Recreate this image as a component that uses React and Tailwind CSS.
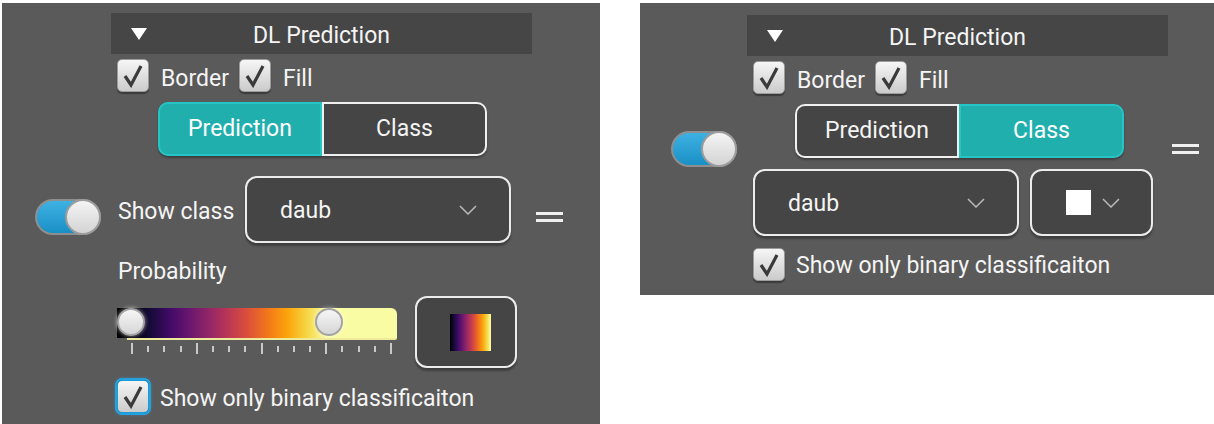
import React from "react";
import clsx from "clsx";

const INFERNO_BAR =
  "bg-[linear-gradient(90deg,#000004_5%,#160b39_12%,#420a68_19%,#6a176e_26%,#932667_33%,#bc3754_40%,#dd513a_47%,#f37819_54%,#fca50a_61%,#f6d746_68%,#fafca4_75%,#fafca4_100%)]";
const INFERNO_SWATCH =
  "bg-[linear-gradient(90deg,#000004_0%,#160b39_10%,#420a68_20%,#6a176e_30%,#932667_40%,#bc3754_50%,#dd513a_60%,#f37819_70%,#fca50a_80%,#f6d746_90%,#fcffa4_100%)]";

function Header() {
  return (
    <div className="grid grid-cols-[1fr_auto_1fr] items-center w-[421px] h-[41px] bg-[#464646]">
      <div className="pl-[20px]">
        <svg width="16" height="12" viewBox="0 0 16 12">
          <polygon points="0,0 16,0 8,12" fill="#ffffff" />
        </svg>
      </div>
      <span className="pt-[4px] text-[23px] leading-[26px] text-[#f4f4f4]">DL Prediction</span>
      <div />
    </div>
  );
}

function Checkbox({ focused }) {
  return (
    <div
      className={clsx(
        "w-[32px] h-[33px] shrink-0 rounded-[5px] border bg-linear-to-b from-[#f6f6f6] to-[#cbcbcb] flex items-center justify-center",
        focused
          ? "border-[#1d9ad6] ring-2 ring-[#22a3df] shadow-[0_0_4px_#3fb6ee]"
          : "border-[#9c9c9c] shadow-[0_2px_1px_rgba(0,0,0,0.35)]"
      )}
    >
      <svg width="24" height="24" viewBox="0 0 24 24">
        <path d="M4 12 L10 21 L20 2" fill="none" stroke="#3a3a3a" strokeWidth="3.2" strokeLinejoin="miter" />
      </svg>
    </div>
  );
}

function CheckRow() {
  return (
    <div className="flex items-center h-[33px]">
      <Checkbox />
      <span className="ml-[12px] pt-[6px] text-[23px] leading-[26px] text-[#f4f4f4]">Border</span>
      <div className="ml-[10px]">
        <Checkbox />
      </div>
      <span className="ml-[12px] pt-[6px] text-[23px] leading-[26px] text-[#f4f4f4]">Fill</span>
    </div>
  );
}

function Segmented({ active }) {
  const on = "bg-[#21afad] border-[#24c5c4] text-white";
  const off = "bg-[#454545] border-[#f0f0f0] text-[#f4f4f4]";
  return (
    <div className="flex w-[329px] h-[54px] rounded-[10px] shadow-[0_2px_2px_rgba(0,0,0,0.3)] text-[23px] leading-[26px]">
      <div
        className={clsx(
          "w-[164px] flex items-center justify-center border-2 rounded-l-[10px]",
          active === "prediction" ? on : off
        )}
      >
        Prediction
      </div>
      <div
        className={clsx(
          "w-[165px] flex items-center justify-center border-2 rounded-r-[10px]",
          active === "class" ? on : off
        )}
      >
        Class
      </div>
    </div>
  );
}

function Toggle() {
  return (
    <div className="w-[66px] h-[36px] rounded-full border-2 border-[#8e8e8e] bg-linear-to-b from-[#3db1e2] to-[#1890c5] flex justify-end items-center">
      <div className="w-[36px] h-[36px] -mr-[2px] rounded-full border-2 border-[#9c9c9c] bg-linear-to-b from-[#f4f4f4] to-[#d4d4d4]" />
    </div>
  );
}

function Chevron() {
  return (
    <svg width="18" height="10" viewBox="0 0 18 10">
      <polyline points="1,1 9,9 17,1" fill="none" stroke="#b9b9b9" strokeWidth="1.5" />
    </svg>
  );
}

function Dropdown() {
  return (
    <div className="w-[266px] h-[67px] shrink-0 rounded-[12px] border-2 border-[#ececec] bg-[#454545] shadow-[0_3px_2px_rgba(0,0,0,0.3)] flex items-center justify-between pl-[33px] pr-[32px]">
      <span className="pt-[3px] text-[23px] leading-[26px] text-[#f4f4f4]">daub</span>
      <Chevron />
    </div>
  );
}

function ColorDropdown() {
  return (
    <div className="w-[123px] h-[67px] shrink-0 rounded-[12px] border-2 border-[#ececec] bg-[#454545] shadow-[0_3px_2px_rgba(0,0,0,0.3)] flex items-center pl-[34px] gap-[11px]">
      <div className="w-[25px] h-[25px] bg-white" />
      <Chevron />
    </div>
  );
}

function Equals() {
  return (
    <div className="flex flex-col gap-[4px]">
      <div className="w-[27px] h-[3px] bg-[#f0f0f0]" />
      <div className="w-[27px] h-[3px] bg-[#f0f0f0]" />
    </div>
  );
}

function Thumb({ className }) {
  return (
    <div
      className={clsx(
        "absolute top-0 w-[28px] h-[28px] rounded-full border-2 border-[#a4a4a4] bg-linear-to-b from-[#f6f6f6] to-[#d6d6d6] shadow-[0_0_4px_rgba(255,255,255,0.6)]",
        className
      )}
    />
  );
}

function RangeSlider() {
  const ticks = Array.from({ length: 17 }, (_, i) => i);
  return (
    <div className="w-[280px] mt-[12px]">
      <div className="relative">
        <div className={clsx("h-[30px] rounded-tr-[6px]", INFERNO_BAR)} />
        <div className="ml-[10px] h-[2px] bg-[#efe99a] rounded-br-[6px]" />
        <Thumb className="left-0" />
        <Thumb className="left-[198px]" />
      </div>
      <div className="mt-[3px] ml-[14px] w-[261px] h-[11px] flex justify-between items-center">
        {ticks.map((i) => (
          <div
            key={i}
            className={clsx("w-[2px] bg-[#c8c8c8]", i % 4 === 0 ? "h-[11px]" : "h-[6px]")}
          />
        ))}
      </div>
    </div>
  );
}

function ColormapButton() {
  return (
    <div className="w-[102px] h-[72px] shrink-0 rounded-[12px] border-2 border-[#ececec] bg-[#454545] shadow-[0_3px_2px_rgba(0,0,0,0.3)] flex items-center pl-[33px]">
      <div className={clsx("w-[41px] h-[37px]", INFERNO_SWATCH)} />
    </div>
  );
}

function LeftPanel() {
  return (
    <div className="w-[598px] h-[421px] shrink-0 bg-[#5a5a5a] flex flex-col pt-[10px]">
      <div className="ml-[109px]">
        <Header />
      </div>
      <div className="ml-[115px] mt-[5px]">
        <CheckRow />
      </div>
      <div className="ml-[156px] mt-[10px]">
        <Segmented active="prediction" />
      </div>

      {/* Show class row */}
      <div className="flex items-start ml-[33px] mt-[20px]">
        <div className="mt-[23px]">
          <Toggle />
        </div>
        <span className="ml-[17px] mt-[23px] w-[127px] text-[23px] leading-[26px] text-[#f4f4f4]">
          Show class
        </span>
        <Dropdown />
        <div className="ml-[25px] mt-[36px]">
          <Equals />
        </div>
      </div>

      <span className="ml-[116px] mt-[16px] text-[23px] leading-[26px] text-[#f4f4f4]">Probability</span>

      <div className="flex items-start ml-[115px] mt-[11px]">
        <RangeSlider />
        <div className="ml-[18px]">
          <ColormapButton />
        </div>
      </div>

      <div className="flex items-center ml-[115px] mt-[12px]">
        <Checkbox focused />
        <span className="ml-[11px] pt-[4px] text-[23px] leading-[26px] text-[#f4f4f4]">
          Show only binary classificaiton
        </span>
      </div>
    </div>
  );
}

function RightPanel() {
  return (
    <div className="w-[574px] h-[292px] shrink-0 bg-[#5a5a5a] flex items-start">
      <div className="ml-[31px] self-center">
        <Toggle />
      </div>
      <div className="ml-[10px] mt-[12px] w-[421px] flex flex-col">
        <Header />
        <div className="ml-[6px] mt-[5px]">
          <CheckRow />
        </div>
        <div className="ml-[48px] mt-[10px]">
          <Segmented active="class" />
        </div>
        <div className="flex ml-[6px] mt-[11px] gap-[11px]">
          <Dropdown />
          <ColorDropdown />
        </div>
        <div className="flex items-center ml-[6px] mt-[12px]">
          <Checkbox />
          <span className="ml-[11px] pt-[2px] text-[23px] leading-[26px] text-[#f4f4f4]">
            Show only binary classificaiton
          </span>
        </div>
      </div>
      <div className="ml-[4px] self-center">
        <Equals />
      </div>
    </div>
  );
}

export default function App() {
  return (
    <div className="min-h-screen bg-white flex items-start gap-[40px] pl-[2px] pt-[3px] font-['Roboto','Liberation_Sans',sans-serif]">
      <LeftPanel />
      <RightPanel />
    </div>
  );
}
